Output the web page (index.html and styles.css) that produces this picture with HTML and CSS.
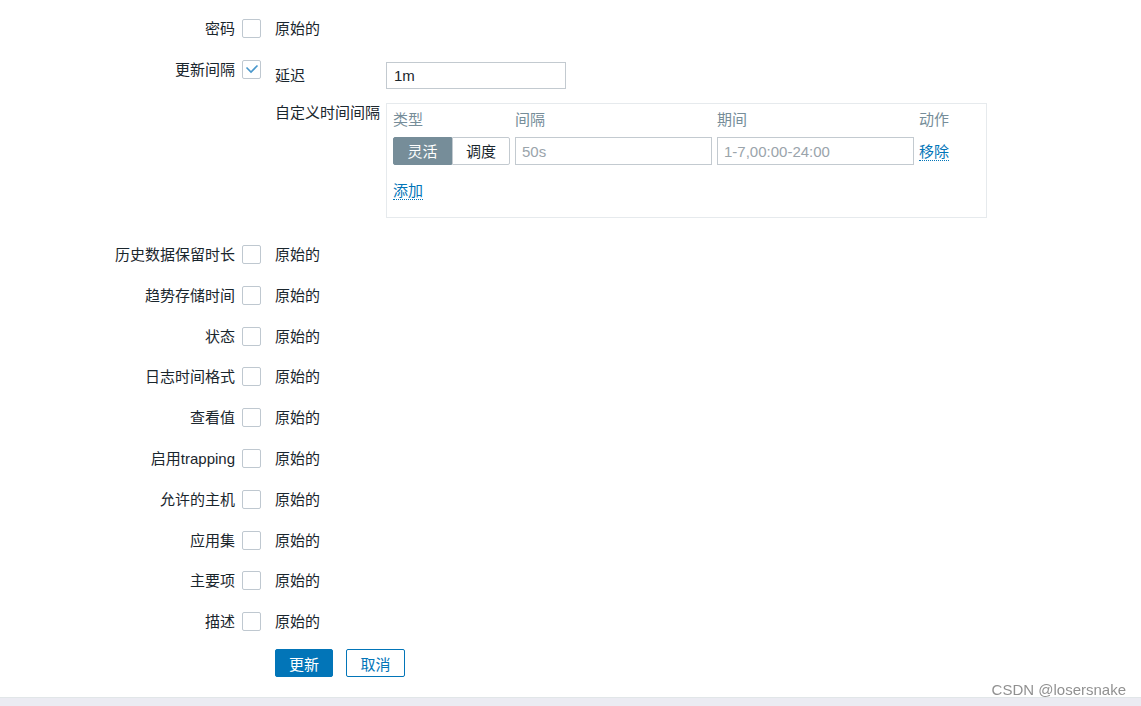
FILE: index.html
```html
<!DOCTYPE html>
<html lang="zh-CN">
<head>
<meta charset="utf-8">
<title>批量更新</title>
<link rel="stylesheet" href="styles.css">
</head>
<body>
<main class="form">
  <div class="row"><span class="lbl">密码</span><span class="cb"></span><span class="val">原始的</span></div>
  <div class="row row-top">
    <span class="lbl">更新间隔</span>
    <span class="cb checked"><svg width="14" height="10" viewBox="0 0 14 10"><polyline points="1.5,3.5 6,8 12.5,1.5" fill="none" stroke="#4a98cc" stroke-width="1.6"/></svg></span>
    <div class="sub">
      <div class="sub-row delay-row">
        <span class="sub-lbl">延迟</span>
        <input class="field delay-field" type="text" value="1m">
      </div>
      <div class="sub-row custom-row">
        <span class="sub-lbl">自定义时间间隔</span>
        <div class="intervals">
          <div class="iv-grid">
            <span class="iv-head">类型</span>
            <span class="iv-head">间隔</span>
            <span class="iv-head">期间</span>
            <span class="iv-head">动作</span>
            <div class="seg"><span class="seg-btn active">灵活</span><span class="seg-btn">调度</span></div>
            <input class="field iv-field" type="text" placeholder="50s">
            <input class="field iv-field" type="text" placeholder="1-7,00:00-24:00">
            <a class="link iv-remove">移除</a>
          </div>
          <a class="link iv-add">添加</a>
        </div>
      </div>
    </div>
  </div>
  <div class="row"><span class="lbl">历史数据保留时长</span><span class="cb"></span><span class="val">原始的</span></div>
  <div class="row"><span class="lbl">趋势存储时间</span><span class="cb"></span><span class="val">原始的</span></div>
  <div class="row"><span class="lbl">状态</span><span class="cb"></span><span class="val">原始的</span></div>
  <div class="row"><span class="lbl">日志时间格式</span><span class="cb"></span><span class="val">原始的</span></div>
  <div class="row"><span class="lbl">查看值</span><span class="cb"></span><span class="val">原始的</span></div>
  <div class="row"><span class="lbl">启用trapping</span><span class="cb"></span><span class="val">原始的</span></div>
  <div class="row"><span class="lbl">允许的主机</span><span class="cb"></span><span class="val">原始的</span></div>
  <div class="row"><span class="lbl">应用集</span><span class="cb"></span><span class="val">原始的</span></div>
  <div class="row"><span class="lbl">主要项</span><span class="cb"></span><span class="val">原始的</span></div>
  <div class="row"><span class="lbl">描述</span><span class="cb"></span><span class="val">原始的</span></div>
  <div class="actions">
    <button class="btn btn-primary" type="button">更新</button>
    <button class="btn btn-alt" type="button">取消</button>
  </div>
</main>
<footer class="footer"></footer>
<div class="watermark">CSDN @losersnake</div>
</body>
</html>
```
FILE: styles.css
```css
* { box-sizing: border-box; }
html, body { margin: 0; padding: 0; }
body {
  min-height: 100vh;
  display: flex;
  flex-direction: column;
  background: #ffffff;
  color: #1a262d;
  font-family: "Liberation Sans", "Noto Sans CJK SC", sans-serif;
  font-size: 15px;
  line-height: 19px;
  overflow: hidden;
}
.form {
  padding: 8.1px 0 20px 0;
}
.row {
  display: grid;
  grid-template-columns: 235px 19px 1fr;
  column-gap: 7px;
  align-items: center;
  padding: 10.9px 0;
}
.row-top { align-items: start; }
.lbl {
  text-align: right;
  white-space: nowrap;
}
.val { margin-left: 7px; }
.cb {
  width: 19px;
  height: 19px;
  border: 1px solid #bfc8d0;
  border-radius: 2px;
  background: #fff;
  display: flex;
  align-items: center;
  justify-content: center;
}
.sub { margin-left: 7px; }
.sub-row {
  display: grid;
  grid-template-columns: 111px 1fr;
}
.delay-row {
  align-items: center;
  margin-top: 2.5px;
}
.custom-row {
  align-items: start;
  margin-top: 14px;
}
.sub-lbl { white-space: nowrap; }
.field {
  font-family: "Liberation Sans", "Noto Sans CJK SC", sans-serif;
  font-size: 15px;
  color: #1a262d;
  border: 1px solid #c3cad0;
  background: #fff;
  border-radius: 0;
  outline: none;
  margin: 0;
}
.field::placeholder { color: #9aa4ab; }
.delay-field {
  width: 180px;
  height: 27px;
  padding: 0 7px;
}
.intervals {
  width: 601px;
  border: 1px solid #e6eaed;
  padding: 8px 7px 17px 6px;
  margin-bottom: 5px;
}
.iv-grid {
  display: grid;
  grid-template-columns: 117px 197px 197px auto;
  column-gap: 5px;
  row-gap: 9px;
  align-items: center;
}
.iv-head {
  color: #768d99;
  line-height: 16px;
}
.seg {
  display: flex;
  height: 28px;
}
.seg-btn {
  display: flex;
  align-items: center;
  justify-content: center;
  width: 58px;
  border: 1px solid #c3cad0;
  background: #fff;
  color: #1a262d;
  border-radius: 0 2px 2px 0;
}
.seg-btn.active {
  width: 59px;
  background: #768d99;
  border-color: #768d99;
  color: #fff;
  border-radius: 2px 0 0 2px;
}
.iv-field {
  width: 197px;
  height: 28px;
  padding: 0 6px;
}
.link {
  color: #0275b8;
  text-decoration: none;
  border-bottom: 1px dotted #0275b8;
  line-height: 16px;
  justify-self: start;
}
.iv-remove { margin-top: 2px; }
.iv-add {
  display: inline-block;
  margin-top: 18px;
}
.actions {
  display: flex;
  gap: 13px;
  padding-left: 275px;
  margin-top: 7.5px;
}
.btn {
  height: 28px;
  font-family: "Liberation Sans", "Noto Sans CJK SC", sans-serif;
  font-size: 15px;
  border: 1px solid #0275b8;
  border-radius: 2px;
  padding: 0;
  cursor: pointer;
}
.btn-primary {
  width: 58px;
  background: #0275b8;
  color: #fff;
}
.btn-alt {
  width: 59px;
  background: #fff;
  color: #0275b8;
}
.footer {
  flex: 1;
  background: #ebebf2;
  border-top: 1px solid #e1e6e8;
}
.watermark {
  position: fixed;
  right: 15px;
  bottom: 8px;
  color: rgba(70, 70, 70, 0.6);
  font-size: 15px;
  line-height: 17px;
}
```
